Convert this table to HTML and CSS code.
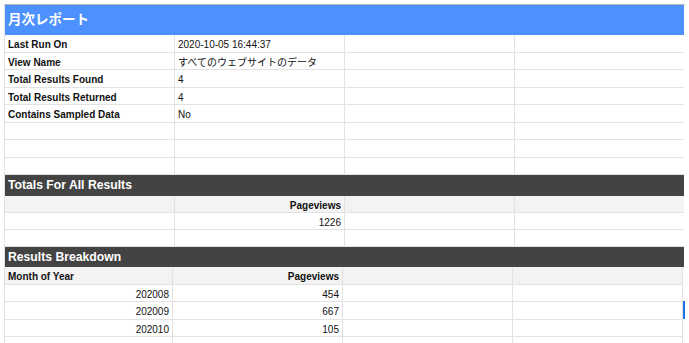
FILE: index.html
```html
<!DOCTYPE html>
<html lang="ja">
<head>
<meta charset="utf-8">
<title>月次レポート</title>
<link rel="stylesheet" href="styles.css">
</head>
<body>
<div class="sheet">
  <div class="title">月次レポート</div>
  <div class="grid grid-top">
    <div class="cell b">Last Run On</div><div class="cell">2020-10-05 16:44:37</div><div class="cell"></div><div class="cell"></div>
    <div class="cell b">View Name</div><div class="cell">すべてのウェブサイトのデータ</div><div class="cell"></div><div class="cell"></div>
    <div class="cell b">Total Results Found</div><div class="cell">4</div><div class="cell"></div><div class="cell"></div>
    <div class="cell b">Total Results Returned</div><div class="cell">4</div><div class="cell"></div><div class="cell"></div>
    <div class="cell b">Contains Sampled Data</div><div class="cell">No</div><div class="cell"></div><div class="cell"></div>
    <div class="cell"></div><div class="cell"></div><div class="cell"></div><div class="cell"></div>
    <div class="cell"></div><div class="cell"></div><div class="cell"></div><div class="cell"></div>
    <div class="cell"></div><div class="cell"></div><div class="cell"></div><div class="cell"></div>
  </div>
  <div class="band band-totals">Totals For All Results</div>
  <div class="grid grid-totals">
    <div class="cell head"></div><div class="cell head b num">Pageviews</div><div class="cell head"></div><div class="cell head"></div>
    <div class="cell"></div><div class="cell num">1226</div><div class="cell"></div><div class="cell"></div>
    <div class="cell"></div><div class="cell"></div><div class="cell"></div><div class="cell"></div>
  </div>
  <div class="band band-breakdown">Results Breakdown</div>
  <div class="grid grid-bottom">
    <div class="cell head b">Month of Year</div><div class="cell head b num">Pageviews</div><div class="cell head"></div><div class="cell head"></div>
    <div class="cell num">202008</div><div class="cell num">454</div><div class="cell"></div><div class="cell"></div>
    <div class="cell num">202009</div><div class="cell num">667</div><div class="cell"></div><div class="cell sel-edge"><span class="selection"></span></div>
    <div class="cell num">202010</div><div class="cell num">105</div><div class="cell"></div><div class="cell"></div>
    <div class="cell"></div><div class="cell"></div><div class="cell"></div><div class="cell"></div>
  </div>
</div>
</body>
</html>
```
FILE: styles.css
```css
html, body {
  margin: 0;
  padding: 0;
  background: #ffffff;
}

body {
  font-family: "Liberation Sans", Arial, "Noto Sans CJK JP", sans-serif;
  color: #000000;
  overflow: hidden;
}

.sheet {
  margin: 4px 0 0 4px;
  width: 680px;
  border-top: 1px solid #b8b8b8;
  border-left: 1px solid #e2e2e2;
}

.title {
  height: 30px;
  width: 679px;
  background: #4d91fe;
  color: #ffffff;
  font-family: "Liberation Sans", "Noto Sans CJK JP", sans-serif;
  font-weight: bold;
  font-size: 13.5px;
  line-height: 30px;
  padding-left: 3px;
  box-sizing: border-box;
}

.grid {
  display: grid;
  grid-template-columns: 170px 170px 170px 169px;
  grid-auto-rows: 17.5px;
}

.grid-totals {
  grid-auto-rows: 17px;
}

.grid-bottom {
  grid-template-columns: 168px 170px 170px 170px;
}

.cell {
  box-sizing: border-box;
  border-right: 1px solid #e2e2e2;
  border-bottom: 1px solid #e2e2e2;
  font-size: 10px;
  line-height: 17px;
  padding: 1px 3px 0;
  white-space: nowrap;
  overflow: hidden;
  color: #111111;
  font-family: "Liberation Sans", "Noto Sans CJK JP", sans-serif;
}

.grid-top .cell:nth-child(4n) {
  border-right: none;
}

.grid-totals .cell:nth-child(4n) {
  border-right: none;
}

.cell.b {
  font-weight: bold;
}

.cell.num {
  text-align: right;
}

.cell.head {
  background: #f3f3f3;
}

.band {
  background: #434343;
  color: #ffffff;
  font-weight: bold;
  font-size: 12.2px;
  padding-left: 3px;
  width: 679px;
  box-sizing: border-box;
}

.band-totals {
  height: 21px;
  line-height: 21px;
}

.band-breakdown {
  height: 20px;
  line-height: 20px;
}

.sel-edge {
  position: relative;
  overflow: visible;
}

.selection {
  position: absolute;
  right: -3px;
  top: -1px;
  width: 2px;
  height: 18px;
  background: #1a73e8;
}
```
